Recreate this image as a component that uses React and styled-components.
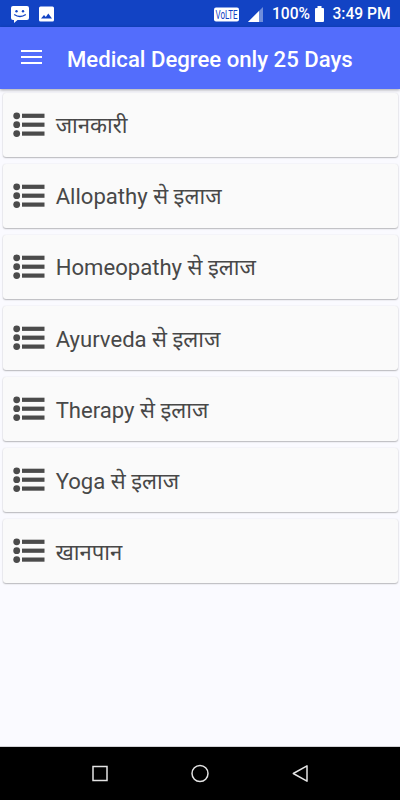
import React from "react";
import styled, { createGlobalStyle } from "styled-components";

const GlobalStyle = createGlobalStyle`
  * {
    box-sizing: border-box;
  }
  body {
    margin: 0;
    background-color: #fafaff;
    font-family: Roboto, "Noto Sans", sans-serif;
  }
`
const Screen = styled.div`
  display: flex;
  flex-direction: column;
  width: 400px;
  height: 800px;
  overflow: hidden;
  background-color: #fafaff;
`
const StatusBar = styled.header`
  display: flex;
  flex: none;
  align-items: center;
  justify-content: space-between;
  height: 27px;
  padding: 1px 9px 0 11px;
  background-color: #1243c4;
  color: #fff;
`
const StatusGroup = styled.div`
  display: flex;
  align-items: center;
`
const StatusIcon = styled.svg`
  display: block;
  flex: none;
  overflow: visible;
  margin-right: ${(props) => props.$gap || 0}px;
`
const StatusText = styled.span`
  width: ${(props) => props.$width}px;
  margin-right: ${(props) => props.$gap || 0}px;
  padding-top: 1px;
  font-size: 15.6px;
  font-weight: 500;
  line-height: 25px;
  white-space: nowrap;
`
const AppBar = styled.div`
  display: flex;
  flex: none;
  align-items: center;
  height: 62px;
  padding-left: 21px;
  background-color: #536dfc;
  box-shadow: 0 1px 3px rgba(0, 0, 0, 0.35);
  z-index: 1;
`
const MenuButton = styled.button`
  display: flex;
  flex-direction: column;
  justify-content: space-between;
  width: 21px;
  height: 14px;
  margin: 0 25px 2px 0;
  padding: 0;
  border: none;
  background: none;
`
const MenuLine = styled.span`
  height: 2px;
  background-color: #fff;
`
const Title = styled.h1`
  margin: 2px 0 0;
  color: #fff;
  font-size: 22.15px;
  font-weight: 500;
  line-height: 30px;
  white-space: nowrap;
`
const List = styled.main`
  display: flex;
  flex: 1;
  flex-direction: column;
  gap: 7.1px;
  padding: 3.5px 2.5px 0;
`
const Card = styled.div`
  display: flex;
  flex: none;
  align-items: center;
  height: 64px;
  padding-left: 10.5px;
  border-radius: 3px;
  background-color: #fafafa;
  box-shadow: 0 1px 1.5px rgba(0, 0, 0, 0.26), 0 0 1.5px rgba(0, 0, 0, 0.1);
`
const ListIcon = styled.svg`
  display: block;
  flex: none;
  margin-right: 10.7px;
`
const Label = styled.span`
  padding-top: 1.6px;
  color: #484848;
  font-size: 22.1px;
  line-height: 30px;
  white-space: nowrap;
`
const NavBar = styled.nav`
  display: flex;
  flex: none;
  align-items: center;
  justify-content: center;
  gap: 76px;
  height: 54px;
  border-top: 1px solid #d2d2d6;
  background-color: #000;
`

const items = [
  "जानकारी",
  "Allopathy से इलाज",
  "Homeopathy से इलाज",
  "Ayurveda से इलाज",
  "Therapy से इलाज",
  "Yoga से इलाज",
  "खानपान",
];

const MessageIcon = () => (
  <StatusIcon $gap={10} width="18" height="17" viewBox="0 0 18 17">
    <path d="M2 0H16Q18 0 18 2V12Q18 14 16 14H6.5L3 17V14H2Q0 14 0 12V2Q0 0 2 0Z" fill="#fff" />
    <circle cx="5.5" cy="5.2" r="1.2" fill="#1243c4" />
    <circle cx="12" cy="5.2" r="1.2" fill="#1243c4" />
    <path d="M3.2 8.5Q9 12.5 14.8 8.5" fill="none" stroke="#1243c4" strokeWidth="1.4" />
  </StatusIcon>
);

const PictureIcon = () => (
  <StatusIcon width="15" height="17" viewBox="0 0 15 17">
    <rect y=".5" width="15" height="15" rx="1.5" fill="#fff" />
    <path d="M2 12.5L5 9L6.8 10.9L9.3 7.5L13 12.5Z" fill="#1243c4" />
  </StatusIcon>
);

const VolteIcon = () => (
  <StatusIcon $gap={9} width="25" height="15" viewBox="0 0 25 15">
    <rect width="25" height="14" y=".5" rx="2" fill="#fff" />
    <text x="1.5" y="12" textLength="22" lengthAdjust="spacingAndGlyphs" fontSize="12" fill="#1243c4">
      VoLTE
    </text>
  </StatusIcon>
);

const SignalIcon = () => (
  <StatusIcon $gap={9} width="15" height="15" viewBox="0 0 15 15">
    <path d="M0 15L15 0V15Z" fill="#fff" fillOpacity=".4" />
    <path d="M0 15L11 4V15Z" fill="#fff" />
  </StatusIcon>
);

const BatteryIcon = () => (
  <StatusIcon $gap={8.5} width="9" height="17" viewBox="0 0 9 17">
    <path d="M2.5 0H6.5V2H8Q9 2 9 3V15Q9 16 8 16H1Q0 16 0 15V3Q0 2 1 2H2.5Z" fill="#fff" />
  </StatusIcon>
);

const BulletList = () => (
  <ListIcon width="32" height="26" viewBox="0 0 32 26">
    {[3.8, 12.7, 21.6].map((y) => (
      <g key={y} fill="#4b4b4b">
        <circle cx="3.7" cy={y} r="3.4" />
        <rect x="9" y={y - 2.1} width="22.5" height="4.2" />
      </g>
    ))}
  </ListIcon>
);

const App = () => {
  return (
    <Screen>
      <GlobalStyle />
      <StatusBar>
        <StatusGroup>
          <MessageIcon />
          <PictureIcon />
        </StatusGroup>
        <StatusGroup>
          <VolteIcon />
          <SignalIcon />
          <StatusText $width={38} $gap={5}>100%</StatusText>
          <BatteryIcon />
          <StatusText $width={58.5}>3:49 PM</StatusText>
        </StatusGroup>
      </StatusBar>
      <AppBar>
        <MenuButton aria-label="Menu">
          <MenuLine />
          <MenuLine />
          <MenuLine />
        </MenuButton>
        <Title>Medical Degree only 25 Days</Title>
      </AppBar>
      <List>
        {items.map((item) => (
          <Card key={item}>
            <BulletList />
            <Label>{item}</Label>
          </Card>
        ))}
      </List>
      <NavBar>
        <svg width="24" height="24" viewBox="0 0 24 24" fill="none" stroke="#e4e4e4" strokeWidth="1.5">
          <rect x="5" y="4.5" width="14" height="14" />
        </svg>
        <svg width="24" height="24" viewBox="0 0 24 24" fill="none" stroke="#e4e4e4" strokeWidth="1.5">
          <circle cx="12" cy="11.5" r="8" />
        </svg>
        <svg width="24" height="24" viewBox="0 0 24 24" fill="none" stroke="#e4e4e4" strokeWidth="1.5" strokeLinejoin="round">
          <path d="M19 3.8V19.2L5.3 11.5Z" />
        </svg>
      </NavBar>
    </Screen>
  );
};

export default App;
